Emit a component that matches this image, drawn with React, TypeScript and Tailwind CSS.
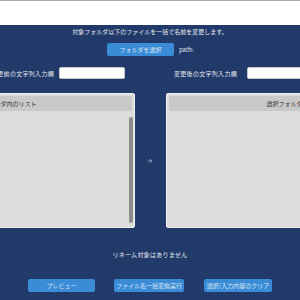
import { ArrowRight } from "lucide-react"

const font = { fontFamily: '"Noto Sans CJK JP", "Noto Sans", sans-serif' }

function Panel({ title }: { title: string }) {
  return (
    <div className="relative w-[250px] h-[135px] shrink-0 rounded-[2px] border border-[#efefef] bg-[#dcdcdc] p-[2px]">
      <div className="h-[15px] rounded-[3px] bg-[#c9c9c9] flex items-center justify-center text-[6px] text-[#333]">
        {title}
      </div>
    </div>
  )
}

export default function App() {
  return (
    <div className="w-[300px] h-[300px] overflow-hidden" style={font}>
      <div className="h-[25px] bg-white border-t border-[#a9a9a9]" />
      <div className="h-[275px] bg-[#223a69] flex flex-col items-center">
        <p className="mt-[2px] text-[6px] leading-[10px] text-[#e3e8f1]">
          対象フォルダ以下のファイルを一括で名前を変更します。
        </p>

        {/* folder select */}
        <div className="w-full flex items-center pl-[107px] mt-[6px]">
          <button className="w-[67px] h-[13px] rounded-[2px] bg-[#3a8cd6] text-[6px] text-[#dbe7f5]">
            フォルダを選択
          </button>
          <span className="ml-[5px] text-[6px] text-[#e3e8f1]">path:</span>
        </div>

        {/* inputs */}
        <div className="w-full flex justify-center mt-[11px]">
          <div className="flex items-center shrink-0 w-[318px]">
            <span className="w-[58px] shrink-0 text-right text-[6px] tracking-[0.3px] text-[#e3e8f1] whitespace-nowrap">変更前の文字列入力欄</span>
            <input className="ml-[10px] w-[66px] h-[12px] rounded-[2px] bg-white border border-[#c9c9c9]" />
            <span className="ml-[49px] w-[63px] shrink-0 text-[6px] tracking-[0.3px] text-[#e3e8f1] whitespace-nowrap">変更後の文字列入力欄</span>
            <input className="ml-[10px] w-[62px] h-[12px] rounded-[2px] bg-white border border-[#c9c9c9]" />
          </div>
        </div>

        {/* panels */}
        <div className="w-full flex justify-center mt-[14px]">
          <div className="flex shrink-0 items-stretch">
            <div className="relative">
              <Panel title="フォルダ内のリスト" />
              <div className="absolute right-[2px] top-[24px] w-[4px] h-[106px] rounded-full bg-[#8c8c8c]" />
            </div>
            <div className="w-[31px] flex items-center justify-center">
              <ArrowRight className="w-[6px] h-[6px] text-[#a9b8d0]" strokeWidth={3} />
            </div>
            <Panel title="選択フォルダ内容" />
          </div>
        </div>

        <p className="mt-[22px] text-[6px] tracking-[0.3px] text-[#e3e8f1]">リネーム対象はありません</p>

        {/* actions */}
        <div className="w-full flex items-center pl-[28px] mt-[20px]">
          <button className="w-[67px] h-[13px] rounded-[2px] bg-[#3a8cd6] text-[6px] text-[#dbe7f5]">プレビュー</button>
          <button className="ml-[19px] w-[70px] h-[13px] rounded-[2px] bg-[#3a8cd6] text-[6px] text-[#dbe7f5]">ファイル名一括変換実行</button>
          <button className="ml-[20px] w-[68px] h-[13px] rounded-[2px] bg-[#3a8cd6] text-[6px] text-[#dbe7f5]">選択/入力内容のクリア</button>
        </div>
      </div>
    </div>
  )
}
